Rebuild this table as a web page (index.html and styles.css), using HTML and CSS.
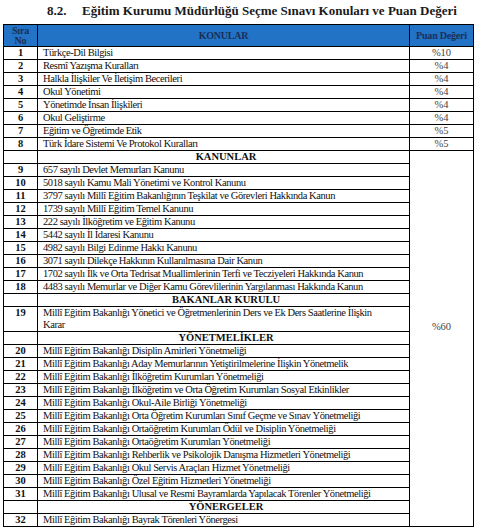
FILE: index.html
```html
<!DOCTYPE html>
<html lang="tr">
<head>
    <meta charset="UTF-8">
    <title>Eğitim Kurumu Müdürlüğü Seçme Sınavı Konuları</title>
    <link rel="stylesheet" href="styles.css">
</head>
<body>
    <div class="page">
        <h2 class="title"><span class="num">8.2.</span>Eğitim Kurumu Müdürlüğü Seçme Sınavı Konuları ve Puan Değeri</h2>

        <table class="topics">
            <colgroup>
                <col class="col-no">
                <col class="col-topic">
                <col class="col-score">
            </colgroup>
            <thead>
                <tr>
                    <th>Sıra<br>No</th>
                    <th>KONULAR</th>
                    <th>Puan Değeri</th>
                </tr>
            </thead>
            <tbody>
                <tr><td class="no">1</td><td>Türkçe-Dil Bilgisi</td><td class="score">%10</td></tr>
                <tr><td class="no">2</td><td>Resmî Yazışma Kuralları</td><td class="score">%4</td></tr>
                <tr><td class="no">3</td><td>Halkla İlişkiler Ve İletişim Becerileri</td><td class="score">%4</td></tr>
                <tr><td class="no">4</td><td>Okul Yönetimi</td><td class="score">%4</td></tr>
                <tr><td class="no">5</td><td>Yönetimde İnsan İlişkileri</td><td class="score">%4</td></tr>
                <tr><td class="no">6</td><td>Okul Geliştirme</td><td class="score">%4</td></tr>
                <tr><td class="no">7</td><td>Eğitim ve Öğretimde Etik</td><td class="score">%5</td></tr>
                <tr><td class="no">8</td><td>Türk İdare Sistemi Ve Protokol Kuralları</td><td class="score">%5</td></tr>

                <tr class="section">
                    <td></td><td>KANUNLAR</td>
                    <td class="score merged" rowspan="29">%60</td>
                </tr>
                <tr><td class="no">9</td><td>657 sayılı Devlet Memurları Kanunu</td></tr>
                <tr><td class="no">10</td><td>5018 sayılı Kamu Mali Yönetimi ve Kontrol Kanunu</td></tr>
                <tr><td class="no">11</td><td>3797 sayılı Millî Eğitim Bakanlığının Teşkilat ve Görevleri Hakkında Kanun</td></tr>
                <tr><td class="no">12</td><td>1739 sayılı Millî Eğitim Temel Kanunu</td></tr>
                <tr><td class="no">13</td><td>222 sayılı İlköğretim ve Eğitim Kanunu</td></tr>
                <tr><td class="no">14</td><td>5442 sayılı İl İdaresi Kanunu</td></tr>
                <tr><td class="no">15</td><td>4982 sayılı Bilgi Edinme Hakkı Kanunu</td></tr>
                <tr><td class="no">16</td><td>3071 sayılı Dilekçe Hakkının Kullanılmasına Dair Kanun</td></tr>
                <tr><td class="no">17</td><td>1702 sayılı İlk ve Orta Tedrisat Muallimlerinin Terfi ve Tecziyeleri Hakkında Kanun</td></tr>
                <tr><td class="no">18</td><td>4483 sayılı Memurlar ve Diğer Kamu Görevlilerinin Yargılanması Hakkında Kanun</td></tr>

                <tr class="section"><td></td><td>BAKANLAR KURULU</td></tr>
                <tr><td class="no">19</td><td>Millî Eğitim Bakanlığı Yönetici ve Öğretmenlerinin Ders ve Ek Ders Saatlerine İlişkin<br>Karar</td></tr>

                <tr class="section"><td></td><td>YÖNETMELİKLER</td></tr>
                <tr><td class="no">20</td><td>Millî Eğitim Bakanlığı Disiplin Amirleri Yönetmeliği</td></tr>
                <tr><td class="no">21</td><td>Millî Eğitim Bakanlığı Aday Memurlarının Yetiştirilmelerine İlişkin Yönetmelik</td></tr>
                <tr><td class="no">22</td><td>Millî Eğitim Bakanlığı İlköğretim Kurumları Yönetmeliği</td></tr>
                <tr><td class="no">23</td><td>Millî Eğitim Bakanlığı İlköğretim ve Orta Öğretim Kurumları Sosyal Etkinlikler</td></tr>
                <tr><td class="no">24</td><td>Millî Eğitim Bakanlığı Okul-Aile Birliği Yönetmeliği</td></tr>
                <tr><td class="no">25</td><td>Millî Eğitim Bakanlığı Orta Öğretim Kurumları Sınıf Geçme ve Sınav Yönetmeliği</td></tr>
                <tr><td class="no">26</td><td>Millî Eğitim Bakanlığı Ortaöğretim Kurumları Ödül ve Disiplin Yönetmeliği</td></tr>
                <tr><td class="no">27</td><td>Millî Eğitim Bakanlığı Ortaöğretim Kurumları Yönetmeliği</td></tr>
                <tr><td class="no">28</td><td>Millî Eğitim Bakanlığı Rehberlik ve Psikolojik Danışma Hizmetleri Yönetmeliği</td></tr>
                <tr><td class="no">29</td><td>Millî Eğitim Bakanlığı Okul Servis Araçları Hizmet Yönetmeliği</td></tr>
                <tr><td class="no">30</td><td>Millî Eğitim Bakanlığı Özel Eğitim Hizmetleri Yönetmeliği</td></tr>
                <tr><td class="no">31</td><td>Millî Eğitim Bakanlığı Ulusal ve Resmi Bayramlarda Yapılacak Törenler Yönetmeliği</td></tr>

                <tr class="section"><td></td><td>YÖNERGELER</td></tr>
                <tr><td class="no">32</td><td>Millî Eğitim Bakanlığı Bayrak Törenleri Yönergesi</td></tr>
            </tbody>
        </table>
    </div>
</body>
</html>
```

FILE: styles.css
```css
* {
    margin: 0;
    padding: 0;
    box-sizing: border-box;
}

body {
    font-family: "Liberation Serif", serif;
    background: #fff;
    color: #111;
}

.page {
    padding: 0 3px;
}

.title {
    height: 24px;
    padding-left: 44px;
    font-size: 13px;
    font-weight: bold;
    line-height: 22px;
    color: #1a1a1a;
}

.title .num {
    display: inline-block;
    width: 35px;
}

.topics {
    width: 471px;
    border-collapse: collapse;
    table-layout: fixed;
    font-size: 10.5px;
    letter-spacing: -0.42px;
}

.col-no {
    width: 34px;
}

.col-score {
    width: 64px;
}

.topics th,
.topics td {
    border: 1px solid #000;
    height: 13px;
    line-height: 12px;
    vertical-align: top;
    white-space: nowrap;
}

.topics th {
    height: 22px;
    background: #2272c6;
    color: #1b2f55;
    font-size: 10px;
    line-height: 10px;
    letter-spacing: -0.2px;
    vertical-align: middle;
    text-align: center;
}

.topics td {
    padding-left: 5px;
}

.topics td.no {
    padding-left: 0;
    text-align: center;
    font-weight: bold;
    letter-spacing: 0;
}

.topics td.score {
    padding-left: 0;
    text-align: center;
    font-weight: normal;
    letter-spacing: 0;
    color: #444;
}

.topics td.merged {
    vertical-align: middle;
    padding-bottom: 24px;
}

.section td {
    text-align: center;
    font-weight: bold;
    letter-spacing: 0;
}
```
